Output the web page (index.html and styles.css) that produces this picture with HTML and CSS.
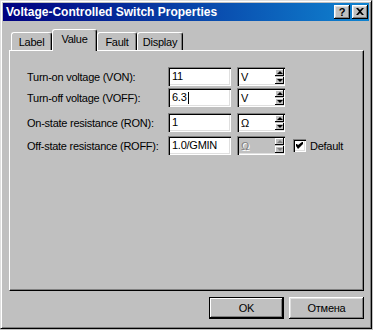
FILE: index.html
```html
<!DOCTYPE html>
<html>
    <head>
        <title>Voltage-Controlled Switch Properties</title>
        <link rel="stylesheet" href="styles.css">
    </head>
    <body>
        <div class="window">
            <div class="titlebar">
                <span class="title">Voltage-Controlled Switch Properties</span>
                <div class="title-btns">
                    <div class="tbtn">?</div>
                    <div class="tbtn">
                        <svg width="8" height="7" viewBox="0 0 8 7"><path d="M0 0h2l2 2 2-2h2L5 3.5 8 7H6L4 5 2 7H0l3-3.5z" fill="#000"/></svg>
                    </div>
                </div>
            </div>
            <div class="content">
                <div class="tabs">
                    <div class="tab tab-label">Label</div>
                    <div class="tab tab-active">Value</div>
                    <div class="tab tab-fault">Fault</div>
                    <div class="tab tab-display">Display</div>
                </div>
                <div class="panel">
                    <div class="row">
                        <span class="lbl">Turn-on voltage (VON):</span>
                        <div class="field">11</div>
                        <div class="unit"><span class="unit-text">V</span><div class="spin"><div class="sb"><i class="up"></i></div><div class="sb"><i class="down"></i></div></div></div>
                    </div>
                    <div class="row row-2">
                        <span class="lbl">Turn-off voltage (VOFF):</span>
                        <div class="field">6.3<span class="caret"></span></div>
                        <div class="unit"><span class="unit-text">V</span><div class="spin"><div class="sb"><i class="up"></i></div><div class="sb"><i class="down"></i></div></div></div>
                    </div>
                    <div class="row row-3">
                        <span class="lbl">On-state resistance (RON):</span>
                        <div class="field">1</div>
                        <div class="unit"><span class="unit-text">Ω</span><div class="spin"><div class="sb"><i class="up"></i></div><div class="sb"><i class="down"></i></div></div></div>
                    </div>
                    <div class="row row-4">
                        <span class="lbl">Off-state resistance (ROFF):</span>
                        <div class="field">1.0/GMIN</div>
                        <div class="unit unit-off"><span class="unit-text">Ω</span><div class="spin"><div class="sb"><i class="up"></i></div><div class="sb"><i class="down"></i></div></div></div>
                        <div class="check">
                            <div class="box">
                                <svg width="7" height="7" viewBox="0 0 7 7"><path d="M0 2h1l1 1 4-3h1v2L2 7H2L0 4z" fill="#000"/></svg>
                            </div>
                            <span>Default</span>
                        </div>
                    </div>
                </div>
                <div class="buttons">
                    <div class="btn btn-default">OK</div>
                    <div class="btn">Отмена</div>
                </div>
            </div>
        </div>
    </body>
</html>
```
FILE: styles.css
```css
body {
    margin: 0;
    background-color: #c0c0c0;
    font-family: "Liberation Sans", Arial, sans-serif;
    font-size: 11px;
    letter-spacing: -0.25px;
    color: #000;
}
.window {
    width: 372px;
    height: 329px;
    box-sizing: border-box;
    border: 1px solid;
    border-color: #dfdfdf #000 #000 #dfdfdf;
    box-shadow: inset 1px 1px #fff, inset -1px -1px #808080;
    padding: 2px;
    display: flex;
    flex-direction: column;
}
.titlebar {
    height: 18px;
    background: linear-gradient(to right, #000080, #1084d0);
    display: flex;
    align-items: center;
    justify-content: space-between;
    padding: 0 1px 0 3px;
}
.title {
    color: #fff;
    font-weight: bold;
    font-size: 12px;
    letter-spacing: 0;
}
.title-btns {
    display: flex;
    gap: 2px;
}
.tbtn {
    width: 16px;
    height: 14px;
    box-sizing: border-box;
    background-color: #c0c0c0;
    box-shadow: inset -1px -1px #000, inset 1px 1px #fff, inset -2px -2px #808080, inset 2px 2px #dfdfdf;
    display: flex;
    align-items: center;
    justify-content: center;
    font-weight: bold;
    font-size: 11px;
    padding-bottom: 1px;
}
.content {
    flex: 1;
    display: flex;
    flex-direction: column;
    padding: 8px 5px 0 6px;
}
.tabs {
    display: flex;
    align-items: flex-end;
    height: 21px;
    padding-left: 2px;
}
.tab {
    height: 18px;
    box-sizing: border-box;
    border-top: 1px solid #fff;
    border-left: 1px solid #fff;
    border-right: 1px solid #000;
    border-radius: 3px 3px 0 0;
    box-shadow: inset -1px 0 #808080;
    text-align: center;
    padding-top: 3px;
    background-color: #c0c0c0;
}
.tab-label { width: 41px; }
.tab-fault { width: 40px; }
.tab-display { width: 46px; }
.tab-active {
    width: 45px;
    height: 22px;
    margin-bottom: -1px;
    position: relative;
    z-index: 1;
    padding-top: 3px;
}
.panel {
    height: 241px;
    box-sizing: border-box;
    border: 1px solid;
    border-color: #fff #000 #000 #fff;
    box-shadow: inset -1px -1px #808080;
    padding: 16px 0 0 17px;
    display: flex;
    flex-direction: column;
}
.row {
    display: flex;
    align-items: center;
    height: 19px;
}
.row-2 { margin-top: 2px; }
.row-3 { margin-top: 6px; }
.row-4 { margin-top: 4px; }
.lbl {
    width: 141px;
}
.field {
    width: 63px;
    height: 19px;
    box-sizing: border-box;
    background-color: #fff;
    box-shadow: inset 1px 1px #808080, inset 2px 2px #000, inset -1px -1px #fff, inset -2px -2px #dfdfdf;
    padding-left: 4px;
    line-height: 19px;
    display: flex;
    align-items: center;
}
.caret {
    width: 1px;
    height: 12px;
    background-color: #000;
    margin-left: 1px;
}
.unit {
    width: 48px;
    height: 19px;
    margin-left: 6px;
    box-sizing: border-box;
    background-color: #fff;
    box-shadow: inset 1px 1px #808080, inset 2px 2px #000, inset -1px -1px #fff, inset -2px -2px #dfdfdf;
    display: flex;
    align-items: center;
    justify-content: space-between;
    padding: 2px 1px 2px 4px;
}
.unit-off {
    background-color: #c0c0c0;
    color: #808080;
}
.unit-off .unit-text {
    text-shadow: 1px 1px #fff;
}
.spin {
    width: 9px;
    height: 15px;
    display: flex;
    flex-direction: column;
    gap: 1px;
    background-color: #c0c0c0;
}
.sb {
    height: 7px;
    background-color: #c0c0c0;
    box-shadow: inset -1px -1px #000, inset 1px 1px #fff;
    display: flex;
    align-items: center;
    justify-content: center;
}
.sb i {
    width: 0;
    height: 0;
    border-left: 3px solid transparent;
    border-right: 3px solid transparent;
}
.sb .up { border-bottom: 3px solid #000; }
.sb .down { border-top: 3px solid #000; }
.unit-off .sb .up { border-bottom-color: #808080; }
.unit-off .sb .down { border-top-color: #808080; }
.check {
    display: flex;
    align-items: center;
    margin-left: 8px;
    gap: 4px;
}
.box {
    width: 13px;
    height: 13px;
    box-sizing: border-box;
    background-color: #fff;
    box-shadow: inset 1px 1px #808080, inset 2px 2px #000, inset -1px -1px #fff, inset -2px -2px #dfdfdf;
    display: flex;
    align-items: center;
    justify-content: center;
}
.buttons {
    display: flex;
    justify-content: flex-end;
    gap: 5px;
    margin-top: 6px;
}
.btn {
    width: 75px;
    height: 22px;
    box-sizing: border-box;
    background-color: #c0c0c0;
    box-shadow: inset -1px -1px #000, inset 1px 1px #fff, inset -2px -2px #808080, inset 2px 2px #dfdfdf;
    display: flex;
    align-items: center;
    justify-content: center;
}
.btn-default {
    border: 1px solid #000;
    box-shadow: inset -1px -1px #000, inset 1px 1px #fff, inset -2px -2px #808080;
}
```
